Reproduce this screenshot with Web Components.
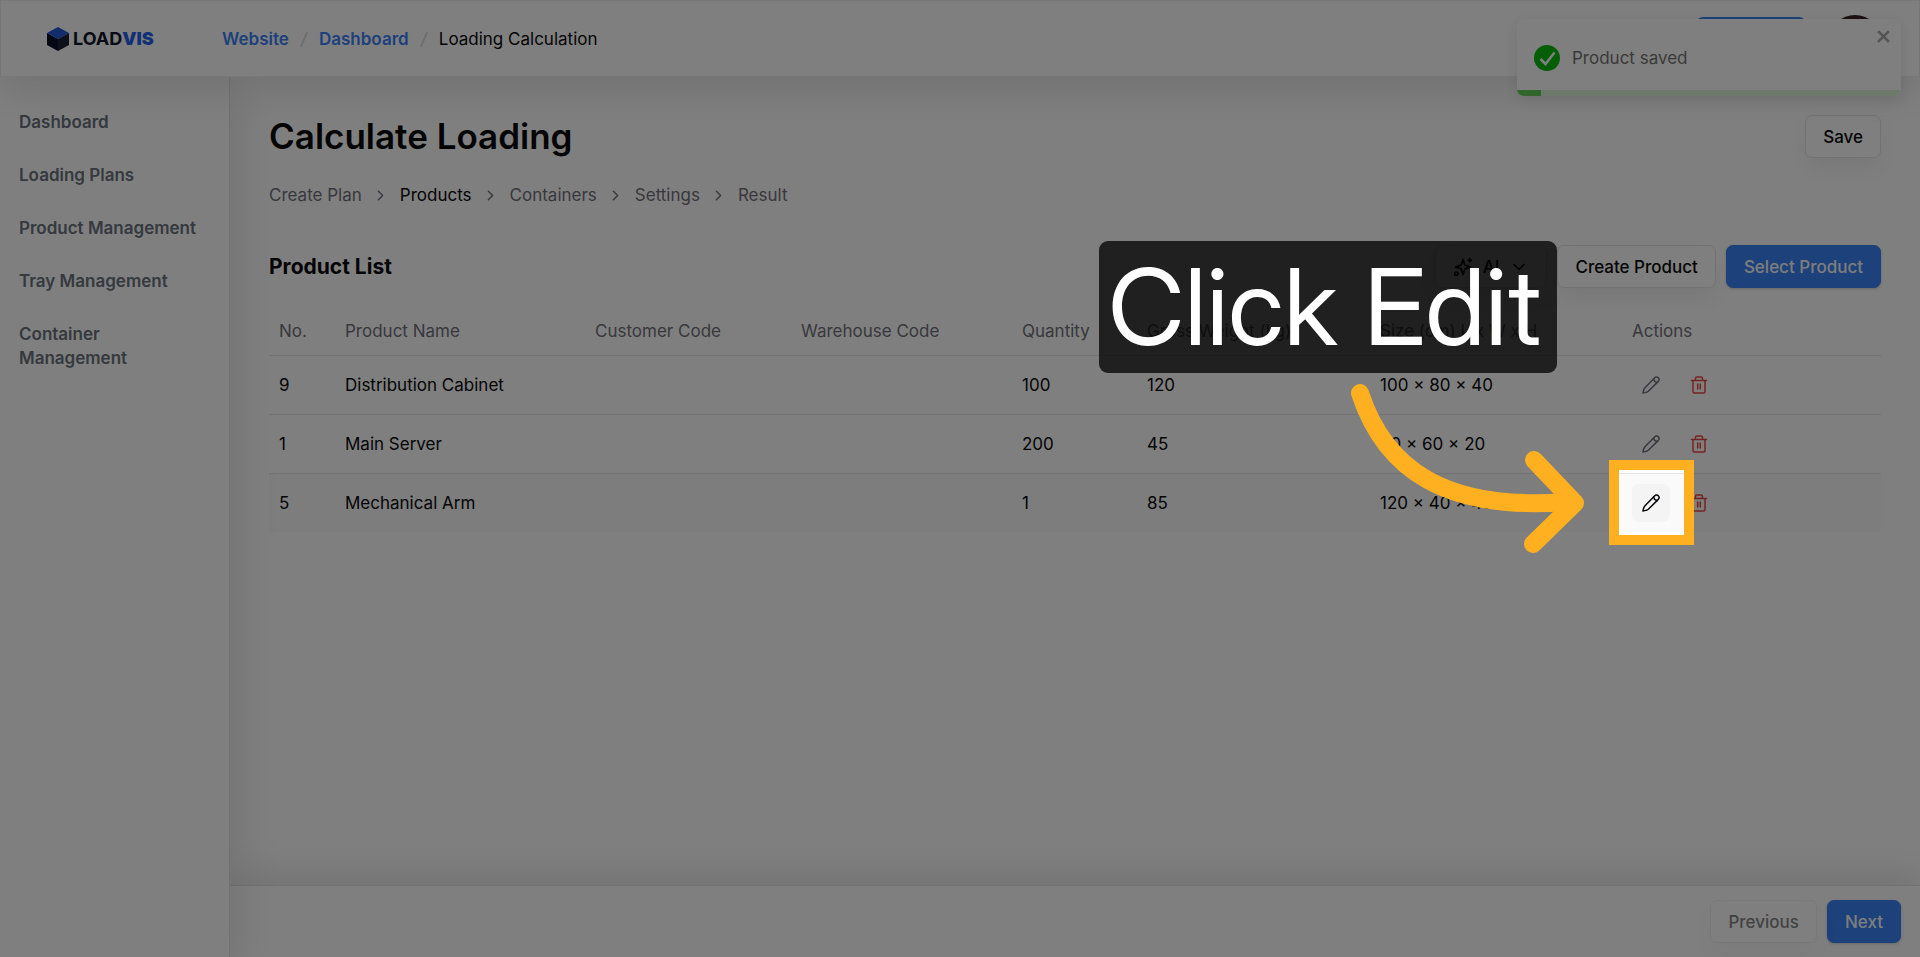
<!DOCTYPE html>
<html lang="en">
<head>
<meta charset="utf-8">
<meta name="viewport" content="width=device-width, initial-scale=1">
<title>Loading Calculation</title>
<style>
  body {
    margin: 0;
    font-family: Inter, "Liberation Sans", sans-serif;
    font-size: 17px;
    line-height: 24px;
    color: #09090b;
    background: #fff;
    --blue: #3b82f6;
    --muted: #71717a;
    --line: #e4e4e7;
  }
</style>
</head>
<body>
<load-app></load-app>

<script>
customElements.define(
  "ui-button",
  class UiButton extends HTMLElement {
    constructor() {
      super();
      this.attachShadow({mode: "open"});
    }

    connectedCallback() {
      this.shadowRoot.innerHTML = `
      <style>
        :host {
          display: block;
        }

        button {
          display: flex;
          align-items: center;
          gap: 10px;
          height: 43px;
          box-sizing: border-box;
          padding: 0 17px;
          border: 1px solid var(--line);
          border-radius: 7px;
          background: #fff;
          color: inherit;
          font: inherit;
          font-weight: 500;
          white-space: nowrap;
          box-shadow: 0 12px 24px rgba(0, 0, 0, .06);
        }

        :host([primary]) button {
          border-color: var(--blue);
          background: var(--blue);
          color: #f8fafc;
          box-shadow: 0 1px 3px rgba(0, 0, 0, .2);
        }

        :host([disabled]) button {
          opacity: .5;
        }
      </style>
      <button type="button" ${this.hasAttribute("disabled") ? "disabled" : ""}><slot></slot></button>
      `;
    }
  }
)

customElements.define(
  "load-header",
  class LoadHeader extends HTMLElement {
    constructor() {
      super();
      this.attachShadow({mode: "open"});
    }

    connectedCallback() {
      this.shadowRoot.innerHTML = `
      <style>
        :host {
          display: flex;
          align-items: center;
          height: 77px;
          box-sizing: border-box;
          padding: 0 39px 0 46px;
          border: 1px solid #eeeef0;
          background: #fff;
          box-shadow: 0 16px 40px rgba(0, 0, 0, .1);
          position: relative;
          z-index: 3;
        }

        .logo {
          display: flex;
          align-items: center;
          gap: 4px;
          width: 175px;
          color: #0f172a;
          font-size: 18px;
          font-weight: 700;
          text-decoration: none;
        }

        .logo b {
          color: #2563eb;
        }

        nav {
          display: flex;
          flex: 1;
          gap: 12px;
        }

        nav a {
          color: var(--blue);
          font-weight: 600;
          text-decoration: none;
        }

        nav i {
          color: #cbd5e1;
        }

        .account {
          display: flex;
          align-items: center;
          gap: 24px;
        }

        .plan {
          width: 110px;
          height: 43px;
          border: 0;
          border-radius: 7px;
          background: var(--blue);
        }

        .avatar {
          width: 50px;
          height: 48px;
          border: 0;
          border-radius: 50%;
          background: #38201f;
        }
      </style>
      <a class="logo" href="#">
        <svg width="22" height="24" viewBox="0 0 22 24" aria-hidden="true">
          <path d="M0 6v12l11 6V12z" fill="#0a1128"/>
          <path d="M22 6v12l-11 6V12z" fill="#1a2030"/>
          <path d="M11 0l11 6-11 6L0 6z" fill="#2459d8"/>
        </svg>
        <span>LOAD<b>VIS</b></span>
      </a>
      <nav>
        <a href="#">Website</a><i>/</i>
        <a href="#">Dashboard</a><i>/</i>
        <span>Loading Calculation</span>
      </nav>
      <div class="account">
        <button class="plan" type="button" aria-label="Plan"></button>
        <button class="avatar" type="button" aria-label="Account"></button>
      </div>
      `;
    }
  }
)

customElements.define(
  "side-nav",
  class SideNav extends HTMLElement {
    constructor() {
      super();
      this.attachShadow({mode: "open"});
    }

    connectedCallback() {
      const items = ["Dashboard", "Loading Plans", "Product Management", "Tray Management", "Container Management"];
      this.shadowRoot.innerHTML = `
      <style>
        :host {
          display: block;
          flex: none;
          width: 230px;
          box-sizing: border-box;
          padding: 23px 19px;
          border-right: 1px solid var(--line);
          background: #fff;
          box-shadow: 8px 12px 40px rgba(0, 0, 0, .1);
          position: relative;
          z-index: 2;
        }

        nav {
          display: flex;
          flex-direction: column;
          gap: 9px;
        }

        a {
          padding: 10px 0;
          color: #6b7280;
          font-weight: 600;
          text-decoration: none;
        }
      </style>
      <nav>${items.map(item => `<a href="#">${item}</a>`).join("")}</nav>
      `;
    }
  }
)

customElements.define(
  "step-trail",
  class StepTrail extends HTMLElement {
    constructor() {
      super();
      this.attachShadow({mode: "open"});
    }

    connectedCallback() {
      const current = this.getAttribute("current");
      const steps = this.getAttribute("steps").split(",");
      const chevron = `<svg width="17" height="17" viewBox="0 0 24 24" fill="none" stroke="currentColor" stroke-width="2" stroke-linecap="round" stroke-linejoin="round" aria-hidden="true"><path d="M9 18l6-6-6-6"/></svg>`;
      this.shadowRoot.innerHTML = `
      <style>
        :host {
          display: block;
        }

        ol {
          display: flex;
          align-items: center;
          gap: 10px;
          margin: 0;
          padding: 0;
          list-style: none;
          color: var(--muted);
        }

        li {
          display: flex;
          align-items: center;
          gap: 11px;
        }

        a {
          color: inherit;
          text-decoration: none;
        }

        a[aria-current] {
          color: #09090b;
        }
      </style>
      <ol>${steps.map((step, i) => `<li>${i ? chevron : ""}<a href="#" ${step === current ? `aria-current="step"` : ""}>${step}</a></li>`).join("")}</ol>
      `;
    }
  }
)

customElements.define(
  "product-table",
  class ProductTable extends HTMLElement {
    constructor() {
      super();
      this.attachShadow({mode: "open"});
    }

    connectedCallback() {
      const heads = ["No.", "Product Name", "Customer Code", "Warehouse Code", "Quantity", "Gross Weight (kg)", "Size (cm) L x W x H", "Actions"];
      const widths = [66, 250, 206, 221, 125, 233, 252];
      const rows = [
        ["9", "Distribution Cabinet", "", "", "100", "120", "100 × 80 × 40"],
        ["1", "Main Server", "", "", "200", "45", "80 × 60 × 20"],
        ["5", "Mechanical Arm", "", "", "1", "85", "120 × 40 × 40"]
      ];
      const actions = `
        <div class="actions">
          <button class="edit" type="button" aria-label="Edit">
            <svg width="20" height="20" viewBox="0 0 20 20" fill="none" stroke="currentColor" stroke-width="1.500" stroke-linecap="round" stroke-linejoin="round">
              <path d="M2 18C2.500 15.500 2.500 14.300 4 12.800L13.500 3C14.700 1.800 16.300 1.800 17.300 2.800S18.300 5.400 17.100 6.600L7.300 16.200C5.800 17.600 4.400 17.400 2 18z"/>
              <path d="M12.700 4c.2 1.900 1.600 3.300 3.500 3.500"/>
            </svg>
          </button>
          <button class="delete" type="button" aria-label="Delete">
            <svg width="20" height="20" viewBox="0 0 20 20" fill="none" stroke="currentColor" stroke-width="1.500" stroke-linecap="round" stroke-linejoin="round">
              <path d="M2.500 5.500h15M4 5.500v11Q4 18 5.500 18h9q1.500 0 1.500-1.500v-11M6.500 5.500V3.500Q6.500 2 8 2h4q1.500 0 1.500 1.500v2M8.700 9v5M11.300 9v5"/>
            </svg>
          </button>
        </div>`;
      this.shadowRoot.innerHTML = `
      <style>
        :host {
          display: block;
        }

        table {
          width: 100%;
          table-layout: fixed;
          border-collapse: collapse;
        }

        th, td {
          padding: 0 10px;
          text-align: left;
          white-space: nowrap;
        }

        th {
          height: 48px;
          color: var(--muted);
          font-weight: 400;
        }

        td {
          height: 58px;
        }

        tr {
          border-bottom: 1px solid var(--line);
        }

        tbody tr:last-child {
          border: 0;
          background: #fafafa;
        }

        .actions {
          display: flex;
          gap: 10px;
        }

        button {
          display: grid;
          place-items: center;
          width: 38px;
          height: 38px;
          padding: 0;
          border: 0;
          border-radius: 7px;
          background: none;
          color: #71717a;
        }

        tr:last-child .edit {
          background: #f4f4f5;
          color: #09090b;
        }

        .actions .delete {
          color: #ef4444;
        }
      </style>
      <table>
        <colgroup>${widths.map(width => `<col style="width: ${width}px">`).join("")}<col></colgroup>
        <thead><tr>${heads.map(head => `<th>${head}</th>`).join("")}</tr></thead>
        <tbody>${rows.map(row => `<tr>${row.map(cell => `<td>${cell}</td>`).join("")}<td>${actions}</td></tr>`).join("")}</tbody>
      </table>
      `;
    }
  }
)

customElements.define(
  "toast-message",
  class ToastMessage extends HTMLElement {
    constructor() {
      super();
      this.attachShadow({mode: "open"});
    }

    connectedCallback() {
      this.shadowRoot.innerHTML = `
      <style>
        :host {
          display: block;
          position: absolute;
          top: 19px;
          right: 19px;
          z-index: 4;
          width: 384px;
          border-radius: 7px;
          overflow: hidden;
          background: #fff;
          color: #757575;
          box-shadow: 0 4px 14px rgba(0, 0, 0, .1);
        }

        .message {
          display: flex;
          align-items: center;
          gap: 12px;
          height: 71px;
          box-sizing: border-box;
          padding: 6px 17px 0;
        }

        .close {
          position: absolute;
          top: 11px;
          right: 11px;
          display: block;
          padding: 0;
          border: 0;
          background: none;
          color: #a9a9a9;
        }

        .close svg {
          display: block;
        }

        .progress {
          height: 6px;
          background: #daf5d7;
        }

        .progress div {
          width: 24px;
          height: 6px;
          background: #61cb56;
        }
      </style>
      <div class="message" role="status">
        <svg width="26" height="26" viewBox="0 0 26 26" fill="none" aria-hidden="true">
          <circle cx="13" cy="13" r="13" fill="#07bc0c"/>
          <path d="M6.500 14l5 5L20.500 7.500" stroke="#fff" stroke-width="2.500"/>
        </svg>
        <span><slot></slot></span>
      </div>
      <button class="close" type="button" aria-label="Close">
        <svg width="13" height="13" viewBox="0 0 12 12" fill="none" stroke="currentColor" stroke-width="2.500"><path d="M1 1l10 10M11 1L1 11"/></svg>
      </button>
      <div class="progress"><div></div></div>
      `;
    }
  }
)

// dims the page and points at one control
customElements.define(
  "tour-hint",
  class TourHint extends HTMLElement {
    constructor() {
      super();
      this.attachShadow({mode: "open"});
    }

    connectedCallback() {
      this.shadowRoot.innerHTML = `
      <style>
        :host {
          display: block;
          position: absolute;
          inset: 0;
          z-index: 5;
          overflow: hidden;
        }

        .spot {
          position: absolute;
          left: 1609px;
          top: 460px;
          width: 65px;
          height: 65px;
          border: 10px solid #feb021;
          box-shadow: 0 0 0 9999px rgba(0, 0, 0, .5);
        }

        .label {
          position: absolute;
          left: 1099px;
          top: 241px;
          width: 458px;
          box-sizing: border-box;
          padding-left: 9px;
          border-radius: 9px;
          background: rgba(0, 0, 0, .75);
          color: #fff;
          font-family: "Inter Display", Inter, sans-serif;
          font-size: 106px;
          line-height: 132px;
          white-space: nowrap;
        }

        svg {
          position: absolute;
          left: 1340px;
          top: 370px;
        }
      </style>
      <div class="spot"></div>
      <div class="label"><slot></slot></div>
      <svg width="260" height="200" viewBox="1340 370 260 200" fill="none" stroke="#feb021" stroke-width="18" stroke-linecap="round" stroke-linejoin="round" aria-hidden="true">
        <path d="M1360 393C1385 470 1446 511 1566 502"/>
        <path d="M1534 460L1575 503L1533 544"/>
        <path d="M1555 490l18 13-18 14z" fill="#feb021" stroke="none"/>
      </svg>
      `;
    }
  }
)

customElements.define(
  "load-app",
  class LoadApp extends HTMLElement {
    constructor() {
      super();
      this.attachShadow({mode: "open"});
    }

    connectedCallback() {
      this.shadowRoot.innerHTML = `
      <style>
        :host {
          display: flex;
          flex-direction: column;
          position: relative;
          min-height: 100vh;
          overflow: hidden;
        }

        .body {
          display: flex;
          flex: 1;
        }

        .page {
          display: flex;
          flex: 1;
          flex-direction: column;
          min-width: 0;
        }

        main {
          flex: 1;
          padding: 38px 39px;
        }

        .bar {
          display: flex;
          align-items: center;
          justify-content: space-between;
          height: 43px;
        }

        .buttons {
          display: flex;
          gap: 10px;
        }

        h1 {
          margin: 0;
          font-size: 35px;
          line-height: 43px;
          font-weight: 600;
        }

        h2 {
          margin: 0;
          font-size: 21px;
          line-height: 29px;
          font-weight: 700;
        }

        step-trail {
          margin: 25px 0 38px;
        }

        product-table {
          margin-top: 19px;
        }

        footer {
          display: flex;
          justify-content: flex-end;
          gap: 10px;
          padding: 14px 19px;
          border-top: 1px solid var(--line);
          box-shadow: 0 -12px 36px rgba(0, 0, 0, .1);
        }
      </style>
      <load-header></load-header>
      <div class="body">
        <side-nav></side-nav>
        <div class="page">
          <main>
            <div class="bar">
              <h1>Calculate Loading</h1>
              <ui-button>Save</ui-button>
            </div>
            <step-trail current="Products" steps="Create Plan,Products,Containers,Settings,Result"></step-trail>
            <div class="bar">
              <h2>Product List</h2>
              <div class="buttons">
                <ui-button>
                  <svg width="20" height="20" viewBox="0 0 24 24" fill="none" stroke="currentColor" stroke-width="2" stroke-linecap="round" stroke-linejoin="round" aria-hidden="true">
                    <path d="M12 3l-1.900 5.800a2 2 0 0 1-1.300 1.300L3 12l5.800 1.900a2 2 0 0 1 1.300 1.300L12 21l1.900-5.800a2 2 0 0 1 1.300-1.300L21 12l-5.800-1.900a2 2 0 0 1-1.300-1.300z"/>
                    <path d="M20 2v4M22 4h-4"/>
                    <circle cx="4" cy="20" r="2"/>
                  </svg>
                  AI
                  <svg width="20" height="20" viewBox="0 0 24 24" fill="none" stroke="currentColor" stroke-width="2" stroke-linecap="round" stroke-linejoin="round" aria-hidden="true"><path d="M6 9l6 6 6-6"/></svg>
                </ui-button>
                <ui-button>Create Product</ui-button>
                <ui-button primary>Select Product</ui-button>
              </div>
            </div>
            <product-table></product-table>
          </main>
          <footer>
            <ui-button disabled>Previous</ui-button>
            <ui-button primary>Next</ui-button>
          </footer>
        </div>
      </div>
      <toast-message>Product saved</toast-message>
      <tour-hint>Click Edit</tour-hint>
      `;
    }
  }
)
</script>
</body>
</html>
